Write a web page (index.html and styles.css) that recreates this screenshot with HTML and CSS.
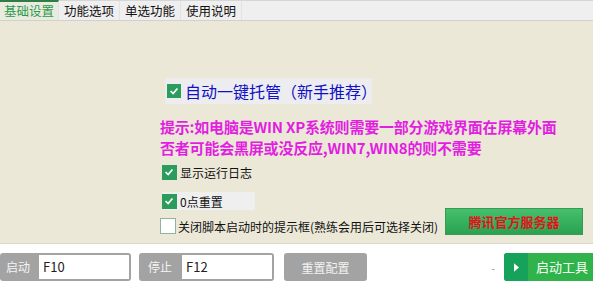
FILE: index.html
```html
<!DOCTYPE html>
<html lang="zh-CN">
<head>
  <meta charset="UTF-8">
  <title>基础设置</title>
  <link rel="stylesheet" href="styles.css">
</head>
<body>

<div class="tabs">
  <div class="tab active">基础设置</div>
  <div class="tab">功能选项</div>
  <div class="tab">单选功能</div>
  <div class="tab">使用说明</div>
</div>

<div class="panel">
  <div class="main-check">
    <span class="box on"><svg viewBox="0 0 14 14"><polyline points="3,7 6,10 11,4"/></svg></span>
    <span>自动一键托管（新手推荐）</span>
  </div>

  <div class="tip">
    提示:如电脑是WIN XP系统则需要一部分游戏界面在屏幕外面<br>
    否者可能会黑屏或没反应,WIN7,WIN8的则不需要
  </div>

  <div class="opt opt-log">
    <span class="box on"><svg viewBox="0 0 14 14"><polyline points="3,7 6,10 11,4"/></svg></span>
    <span>显示运行日志</span>
  </div>
  <div class="opt opt-reset">
    <span class="box on"><svg viewBox="0 0 14 14"><polyline points="3,7 6,10 11,4"/></svg></span>
    <span>0点重置</span>
  </div>
  <div class="last-row">
    <div class="opt opt-close">
      <span class="box"></span>
      <span>关闭脚本启动时的提示框(熟练会用后可选择关闭)</span>
    </div>
    <button class="server-btn">腾讯官方服务器</button>
  </div>
</div>

<div class="bottom">
  <div class="field">
    <span class="field-label">启动</span>
    <span class="field-input">F10</span>
  </div>
  <div class="field">
    <span class="field-label">停止</span>
    <span class="field-input">F12</span>
  </div>
  <button class="gray-btn">重置配置</button>
  <span class="dash">-</span>
  <button class="start-btn"><span class="start-icon"><svg viewBox="0 0 6 10"><polygon points="0,0 6,5 0,10"/></svg></span><span class="start-text">启动工具</span></button>
</div>

</body>
</html>
```

FILE: styles.css
```css
body {
  margin: 0;
  width: 593px;
  height: 288px;
  overflow: hidden;
  font-family: "Noto Sans CJK SC", "Liberation Sans", sans-serif;
  background-color: #ffffff;
}
.tabs {
  display: flex;
  height: 19px;
  background-color: #efefef;
  border-top: 1px solid #d6d6d6;
  border-bottom: 1px solid #d0d0d0;
}
.tab {
  font-size: 12.5px;
  line-height: 19px;
  padding: 0 5px;
  color: #111;
  border-right: 1px solid #e2e2e2;
}
.tab.active {
  color: #2b9a4c;
  background-color: #e9ebde;
  border-top: 2px solid #2f7d45;
  margin-top: -1px;
  line-height: 18px;
  padding: 0 4px;
}
.panel {
  height: 223px;
  background-color: #ebe8d8;
  border-bottom: 1px solid #d9d7cc;
  padding-left: 160px;
  box-sizing: border-box;
  padding-top: 57px;
}
.box {
  display: inline-block;
  width: 14px;
  height: 14px;
  box-sizing: border-box;
  border: 1px solid #8fb59c;
  background-color: #fff;
  flex-shrink: 0;
}
.box.on {
  background-color: #2c9c5c;
  border-color: #2c9c5c;
}
.box svg {
  display: block;
  width: 12px;
  height: 12px;
  fill: none;
  stroke: #fff;
  stroke-width: 2;
}
.main-check {
  display: flex;
  align-items: center;
  gap: 4px;
  width: 207px;
  height: 26px;
  margin-left: 5px;
  padding-left: 2px;
  box-sizing: border-box;
  background-color: #ededf0;
  color: #1010c8;
  font-size: 16px;
}
.tip {
  margin-top: 12px;
  color: #e21fe0;
  font-weight: bold;
  font-size: 15px;
  line-height: 21px;
  letter-spacing: -0.2px;
  white-space: nowrap;
}
.opt {
  display: flex;
  align-items: center;
  gap: 3px;
  font-size: 12px;
  color: #111;
  height: 18px;
  white-space: nowrap;
}
.opt .box {
  width: 15px;
  height: 15px;
}
.opt-log {
  margin-top: 5px;
  margin-left: 2px;
}
.opt-reset {
  margin-top: 11px;
  margin-left: 2px;
  width: 93px;
  background-color: #efefef;
}
.opt-close {
  gap: 2px;
}
.opt-close .box {
  width: 16px;
  height: 16px;
}
.last-row {
  display: flex;
  align-items: flex-end;
  padding-right: 10px;
  margin-top: -2px;
}
.server-btn {
  width: 138px;
  height: 27px;
  margin-left: auto;
  flex-shrink: 0;
  border: 1px solid #3a9a55;
  background: linear-gradient(#45c06c, #2aa251);
  color: #e0141a;
  font-family: "Noto Sans CJK SC", sans-serif;
  font-weight: bold;
  font-size: 13px;
  padding: 0;
}
.bottom {
  display: flex;
  align-items: center;
  height: 44px;
  padding-top: 2px;
  box-sizing: border-box;
}
.field {
  display: flex;
  height: 28px;
  margin-right: 8px;
}
.field-label {
  background-color: #a3a3a3;
  color: #f4f4f4;
  font-size: 12px;
  line-height: 28px;
  padding: 0 9px 0 6px;
  border-radius: 3px 0 0 3px;
}
.field-input {
  width: 86px;
  border: 2px solid #a3a3a3;
  border-left: none;
  border-radius: 0 3px 3px 0;
  font-size: 13px;
  line-height: 24px;
  padding-left: 4px;
  color: #222;
}
.field + .field .field-label {
  padding: 0 10px 0 9px;
}
.gray-btn {
  width: 83px;
  height: 28px;
  margin-left: 2px;
  border: none;
  border-radius: 3px;
  background-color: #a3a3a3;
  color: #f2f2f2;
  font-family: "Noto Sans CJK SC", sans-serif;
  font-size: 12px;
  padding: 0;
}
.dash {
  margin-left: auto;
  margin-right: 9px;
  font-size: 10px;
  color: #888;
}
.start-btn {
  display: flex;
  height: 28px;
  width: 92px;
  margin-right: -3px;
  padding: 0;
  border: none;
  border-radius: 3px;
  overflow: hidden;
  background-color: #2fb34a;
  font-family: "Noto Sans CJK SC", sans-serif;
}
.start-icon {
  width: 24px;
  height: 28px;
  background-color: #17a25c;
  display: flex;
  align-items: center;
  justify-content: center;
}
.start-icon svg {
  width: 5px;
  height: 9px;
  fill: #fff;
}
.start-text {
  flex: 1;
  color: #f4fff4;
  font-size: 13px;
  line-height: 28px;
  text-align: center;
}
```
